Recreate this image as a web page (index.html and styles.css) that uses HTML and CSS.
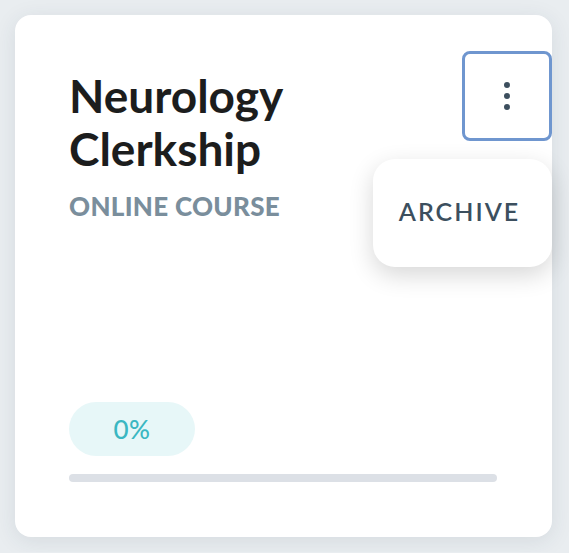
FILE: index.html
```html
<!DOCTYPE html>
<html lang="en">
<head>
    <meta charset="UTF-8">
    <meta name="viewport" content="width=device-width, initial-scale=1.0">
    <title>Neurology Clerkship</title>
    <link rel="stylesheet" href="styles.css">
</head>
<body>
    <div class="course-card">
        <div class="card-header">
            <div class="card-titles">
                <h2 class="course-title">Neurology Clerkship</h2>
                <div class="course-type">ONLINE COURSE</div>
            </div>
            <button class="menu-button" aria-label="More options">
                <svg width="8" height="30" viewBox="0 0 8 30">
                    <circle cx="4" cy="4" r="3" fill="#3d4f5e"/>
                    <circle cx="4" cy="15" r="3" fill="#3d4f5e"/>
                    <circle cx="4" cy="26" r="3" fill="#3d4f5e"/>
                </svg>
            </button>
        </div>
        <div class="dropdown">
            <button class="dropdown-item">ARCHIVE</button>
        </div>
        <div class="progress-badge">0%</div>
        <div class="progress-track">
            <div class="progress-fill" style="width: 0%"></div>
        </div>
    </div>
</body>
</html>
```

FILE: styles.css
```css
body {
    font-family: Lato, "Open Sans", Arial, sans-serif;
    background-color: #e9edf0;
    margin: 0;
    padding: 15px;
}
.course-card {
    background-color: #ffffff;
    border-radius: 16px;
    box-shadow: 0 4px 22px rgba(40, 60, 80, 0.1);
    width: 537px;
    height: 522px;
    box-sizing: border-box;
    padding: 36px 0 55px 54px;
    position: relative;
    display: flex;
    flex-direction: column;
}
.card-header {
    display: flex;
    justify-content: space-between;
    align-items: flex-start;
}
.card-titles {
    padding-top: 18px;
}
.course-title {
    margin: 0;
    font-size: 46px;
    line-height: 53px;
    font-weight: 700;
    color: #1c1d1d;
    width: 250px;
}
.course-type {
    margin-top: 16px;
    font-size: 26px;
    line-height: 30px;
    font-weight: 900;
    color: #7a8e9c;
    letter-spacing: 0.3px;
}
.menu-button {
    width: 90px;
    height: 90px;
    border: 3px solid #6f96cf;
    border-radius: 8px;
    background-color: #ffffff;
    display: flex;
    align-items: center;
    justify-content: center;
    padding: 0;
    cursor: pointer;
}
.dropdown {
    position: absolute;
    top: 144px;
    right: 0;
    width: 179px;
    height: 108px;
    background-color: #ffffff;
    border-radius: 22px;
    box-shadow: 0 8px 24px rgba(0, 0, 0, 0.16);
    display: flex;
    align-items: center;
    justify-content: center;
}
.dropdown-item {
    border: none;
    background: none;
    font-family: inherit;
    font-size: 25px;
    font-weight: 600;
    letter-spacing: 2px;
    color: #3c4f5e;
    padding: 0 6px 4px 0;
    cursor: pointer;
}
.progress-badge {
    margin-top: auto;
    width: 126px;
    height: 54px;
    border-radius: 27px;
    background-color: #e7f7f8;
    color: #3ab7c2;
    font-size: 26px;
    font-weight: 500;
    line-height: 54px;
    text-align: center;
    letter-spacing: 0.5px;
}
.progress-track {
    margin-top: 18px;
    width: 428px;
    height: 8px;
    border-radius: 4px;
    background-color: #dce0e6;
}
.progress-fill {
    height: 100%;
    border-radius: 4px;
    background-color: #3ab7c2;
}
```
